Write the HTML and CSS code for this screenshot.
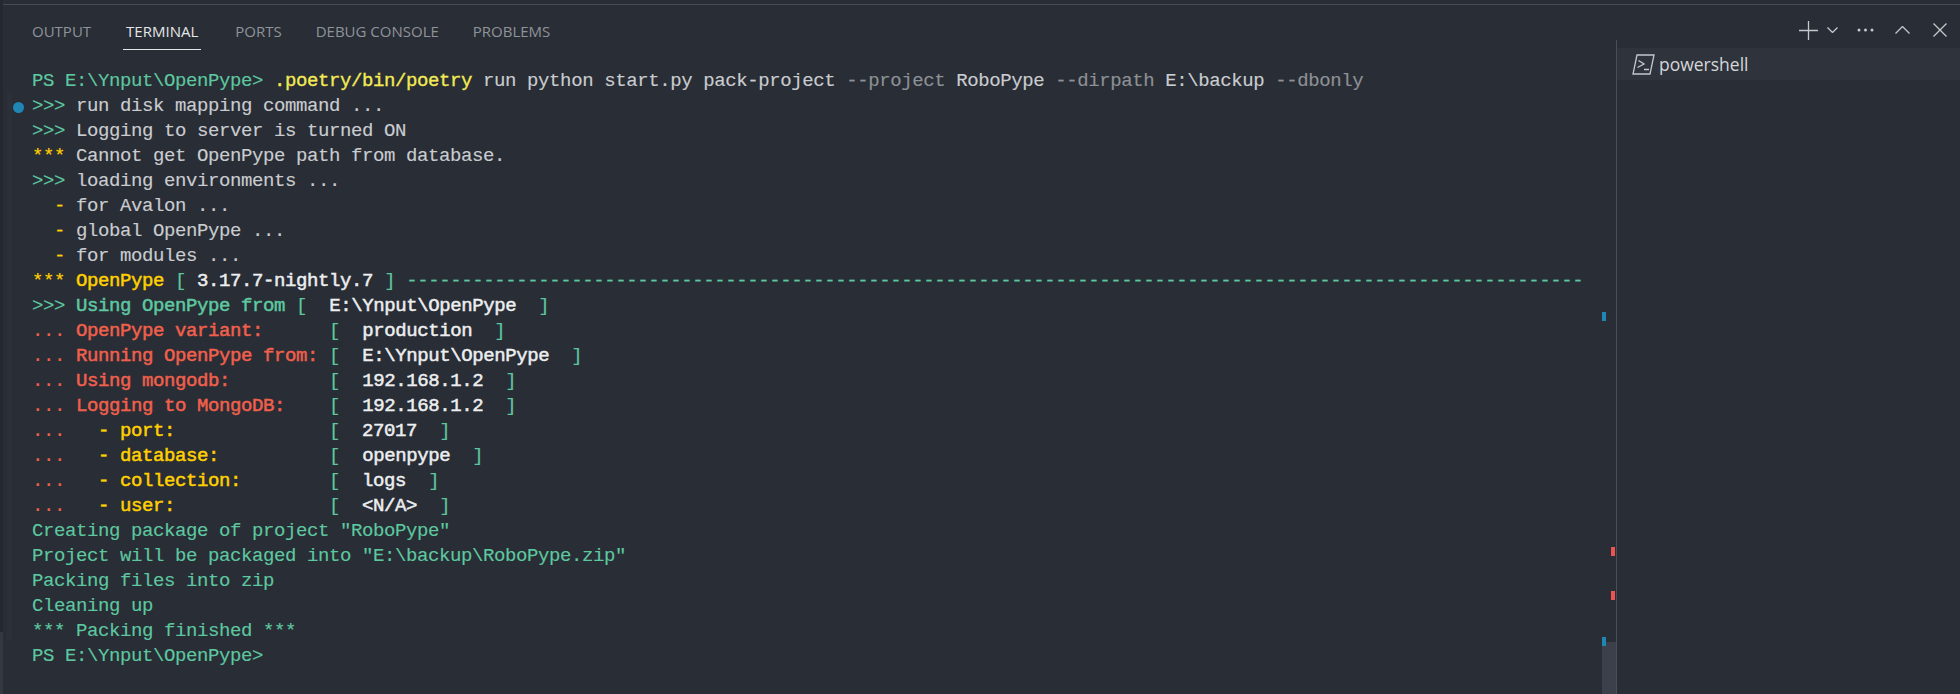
FILE: index.html
```html
<!DOCTYPE html>
<html lang="en">
<head>
<meta charset="utf-8">
<title>Terminal</title>
<link rel="stylesheet" href="styles.css">
</head>
<body>
<div class="edge"><i class="edge-thumb"></i></div>
<div class="panel">
  <header class="tabbar">
    <nav class="tabs">
      <span class="tab">Output</span>
      <span class="tab active">Terminal</span>
      <span class="tab">Ports</span>
      <span class="tab">Debug Console</span>
      <span class="tab">Problems</span>
    </nav>
    <div class="actions">
      <svg class="ic-plus" viewBox="0 0 19 19"><path d="M9.5 0v19M0 9.5h19"/></svg>
      <svg class="ic-chev" viewBox="0 0 11 6"><path d="M0.5 0.5l5 5 5-5"/></svg>
      <svg class="ic-more" viewBox="0 0 17 4"><circle cx="2" cy="2" r="1.5"/><circle cx="8.5" cy="2" r="1.5"/><circle cx="15" cy="2" r="1.5"/></svg>
      <svg class="ic-up" viewBox="0 0 15 8"><path d="M0.5 7.5l7-7 7 7"/></svg>
      <svg class="ic-x" viewBox="0 0 14 14"><path d="M0.5 0.5l13 13M13.5 0.5l-13 13"/></svg>
    </div>
  </header>
  <div class="body">
    <main class="term">
      <span class="gutter"></span>
      <span class="dot"></span>
<pre class="out"><span class="g">PS E:\Ynput\OpenPype&gt;</span> <span class="c">.poetry/bin/poetry</span> run python start.py pack-project <span class="d">--project</span> RoboPype <span class="d">--dirpath</span> E:\backup <span class="d">--dbonly</span>
<span class="g">&gt;&gt;&gt;</span> run disk mapping command ...
<span class="g">&gt;&gt;&gt;</span> Logging to server is turned ON
<span class="y">***</span> Cannot get OpenPype path from database.
<span class="g">&gt;&gt;&gt;</span> loading environments ...
  <span class="y">-</span> for Avalon ...
  <span class="y">-</span> global OpenPype ...
  <span class="y">-</span> for modules ...
<span class="y">***</span> <span class="y b">OpenPype</span> <span class="g">[</span> <span class="w">3.17.7-nightly.7</span> <span class="g">]</span> <span class="g">-----------------------------------------------------------------------------------------------------------</span>
<span class="g">&gt;&gt;&gt;</span> <span class="g b">Using OpenPype from</span> <span class="g">[</span>  <span class="w">E:\Ynput\OpenPype</span>  <span class="g">]</span>
<span class="r">...</span> <span class="r b">OpenPype variant:</span>      <span class="g">[</span>  <span class="w">production</span>  <span class="g">]</span>
<span class="r">...</span> <span class="r b">Running OpenPype from:</span> <span class="g">[</span>  <span class="w">E:\Ynput\OpenPype</span>  <span class="g">]</span>
<span class="r">...</span> <span class="r b">Using mongodb:</span>         <span class="g">[</span>  <span class="w">192.168.1.2</span>  <span class="g">]</span>
<span class="r">...</span> <span class="r b">Logging to MongoDB:</span>    <span class="g">[</span>  <span class="w">192.168.1.2</span>  <span class="g">]</span>
<span class="r">...</span>   <span class="y b">- port:</span>              <span class="g">[</span>  <span class="w">27017</span>  <span class="g">]</span>
<span class="r">...</span>   <span class="y b">- database:</span>          <span class="g">[</span>  <span class="w">openpype</span>  <span class="g">]</span>
<span class="r">...</span>   <span class="y b">- collection:</span>        <span class="g">[</span>  <span class="w">logs</span>  <span class="g">]</span>
<span class="r">...</span>   <span class="y b">- user:</span>              <span class="g">[</span>  <span class="w">&lt;N/A&gt;</span>  <span class="g">]</span>
<span class="g">Creating package of project "RoboPype"</span>
<span class="g">Project will be packaged into "E:\backup\RoboPype.zip"</span>
<span class="g">Packing files into zip</span>
<span class="g">Cleaning up</span>
<span class="g">*** Packing finished ***</span>
<span class="g">PS E:\Ynput\OpenPype&gt;</span></pre>
      <div class="ruler">
        <i class="mark blue m1"></i>
        <i class="mark red m2"></i>
        <i class="mark red m3"></i>
        <i class="thumb"></i>
        <i class="mark blue m4"></i>
      </div>
    </main>
    <aside class="list">
      <div class="item">
        <svg class="ic-ps" viewBox="0 0 23 21"><path d="M5 1h17l-4 19H1zM6.5 6.5l5.5 3.5-6.5 3.5M12 15.5h5"/></svg>
        <span>powershell</span>
      </div>
    </aside>
  </div>
</div>
</body>
</html>
```
FILE: styles.css
```css
* { box-sizing: border-box; }
html, body { margin: 0; height: 100%; }
body { background: #292d35; overflow: hidden; }
.edge { position: absolute; left: 0; top: 0; bottom: 0; width: 3px; background: #25282f; }
.edge-thumb { position: absolute; left: 0; right: 0; top: 632px; bottom: 0; background: #343841; }
.panel {
  display: flex;
  flex-direction: column;
  border-top: 1px solid #474b52;
  margin-top: 4px;
  height: 690px;
}
.tabbar {
  height: 35px;
  flex: none;
  display: flex;
  justify-content: space-between;
  padding: 12px 0 0 32px;
}
.tabs { display: flex; gap: 34px; }
.tab {
  font: 15px/28px "Open Sans", sans-serif;
  text-transform: uppercase;
  color: #8f939a;
  height: 33px;
}
.tab.active { color: #e4e6e8; border-bottom: 1px solid #e4e6e8; padding: 0 3px; margin-left: -2px; }
.actions { display: flex; align-items: center; height: 26px; padding-right: 13px; }
.actions svg { fill: none; stroke: #c5c8cc; stroke-width: 1.3; display: block; }
.ic-plus { width: 19px; height: 19px; margin-right: 9px; }
.ic-chev { width: 11px; height: 6px; margin-right: 19px; }
.ic-more { width: 17px; height: 4px; margin-right: 21px; }
.actions .ic-more circle { fill: #c5c8cc; stroke: none; }
.ic-up { width: 15px; height: 8px; margin-right: 23px; }
.ic-x { width: 14px; height: 14px; }
.body { flex: 1; display: flex; min-height: 0; position: relative; }
.term { flex: 1; position: relative; padding: 29px 0 0 32px; }
.out {
  margin: 0;
  font: 19px/25px "Liberation Mono", monospace;
  letter-spacing: -0.4px;
  color: #c9ccd0;
  -webkit-text-stroke: 0.15px currentColor;
}
.g { color: #5dc8a0; }
.c { color: #f2ea55; -webkit-text-stroke: 0.35px currentColor; }
.d { color: #8d9196; }
.y { color: #ffd000; }
.r { color: #f0604c; }
.w { color: #eceef0; -webkit-text-stroke: 0.5px currentColor; }
.b { -webkit-text-stroke: 0.5px currentColor; }
.dot {
  position: absolute; left: 13px; top: 62px;
  width: 11px; height: 11px; border-radius: 50%;
  background: #1f86b5;
}
.gutter {
  position: absolute; left: 7px; top: 52px; width: 5px; height: 548px;
  background: #2c3038;
}
.ruler { position: absolute; top: 0; bottom: 0; right: 0; width: 14px; }
.mark { position: absolute; width: 4px; height: 9px; }
.blue { background: #1f86b5; left: 0; }
.red { background: #ef5350; left: 9px; }
.m1 { top: 272px; }
.m2 { top: 507px; }
.m3 { top: 551px; }
.m4 { top: 597px; }
.thumb { position: absolute; left: 0; right: 0; top: 602px; bottom: 0; background: #3b404a; }
.list {
  width: 344px;
  flex: none;
  border-left: 1px solid #4a4e55;
  padding-top: 8px;
}
.item {
  height: 32px;
  background: #2f333c;
  display: flex;
  align-items: center;
  gap: 4px;
  padding-left: 15px;
  font: 17.5px "Open Sans", sans-serif;
  color: #d5d7da;
}
.ic-ps { width: 23px; height: 21px; fill: none; stroke: #c5c8cc; stroke-width: 1.3; }
```
